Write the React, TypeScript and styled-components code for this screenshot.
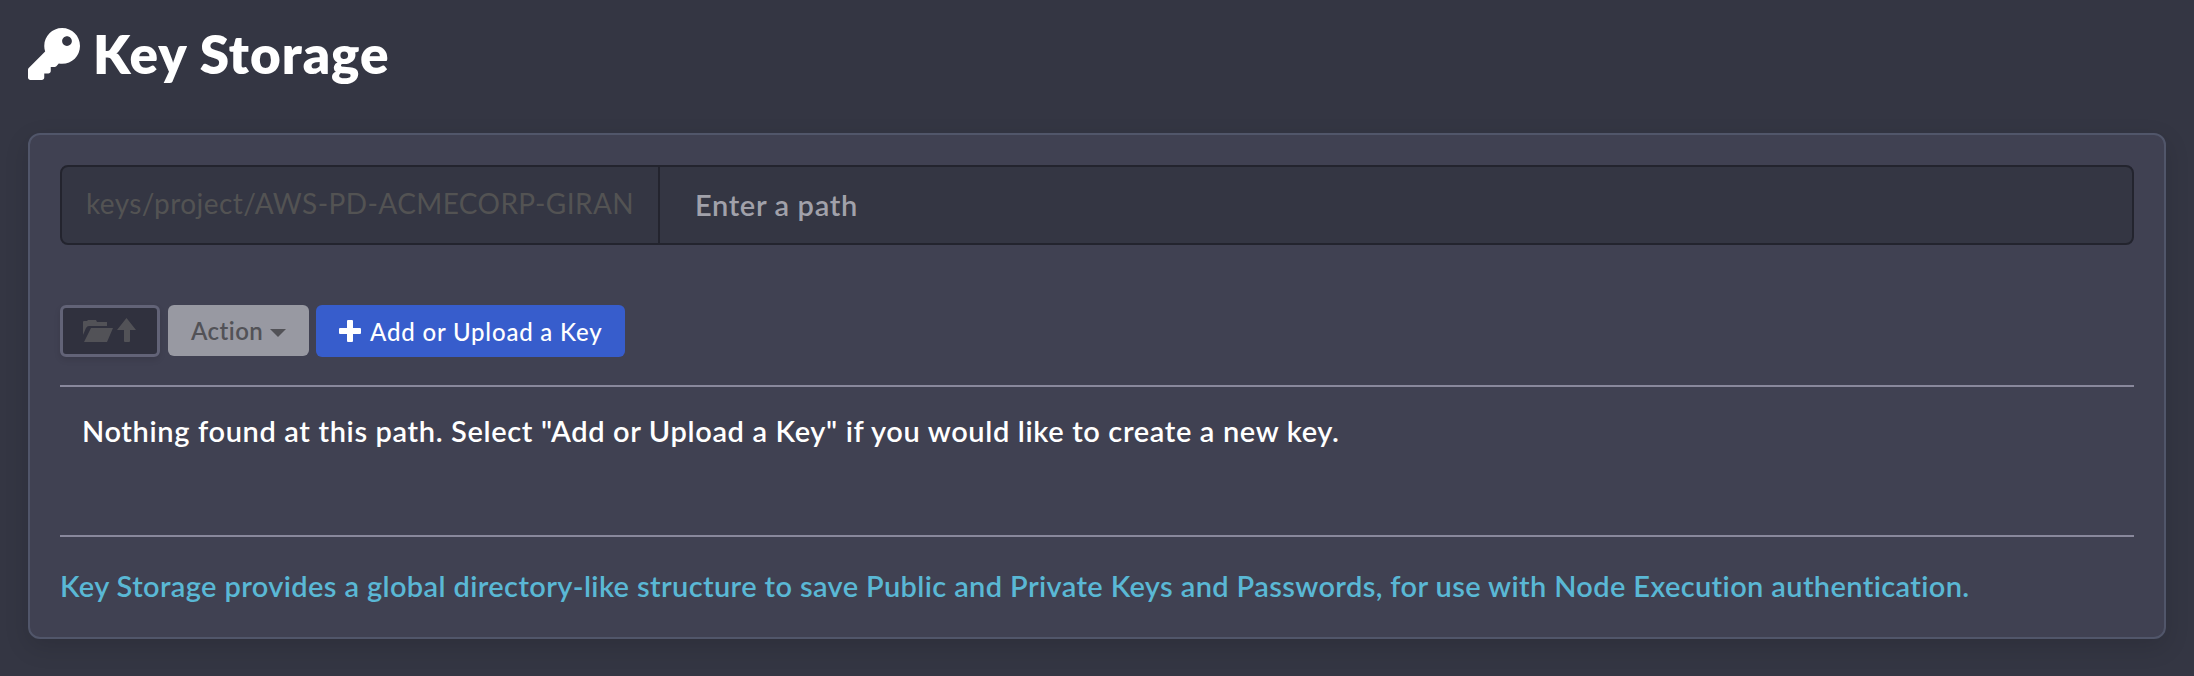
import React from "react";
import styled, { createGlobalStyle } from "styled-components";
import { FaKey } from "react-icons/fa";

const Global = createGlobalStyle`
  *, *::before, *::after { box-sizing: border-box; }
  body {
    margin: 0;
    background: #343643;
    color: #fff;
    font-family: Lato, "Open Sans", sans-serif;
    font-size: 29px;
    font-weight: 600;
    font-variant-ligatures: none;
  }
`;

const Page = styled.main`
  height: 676px;
  padding: 28px 28px 0;
  overflow: hidden;
`;

const Title = styled.h1`
  display: flex;
  align-items: flex-start;
  gap: 13px;
  height: 105px;
  margin: 0;
  font-size: 53px;
  font-weight: 800;
  line-height: 52px;
`;

const KeyIcon = styled(FaKey)`
  width: 52px;
  height: 52px;
`;

const Text = styled.span<{ $track?: number }>`
  letter-spacing: ${(p) => p.$track ?? 0}px;
  white-space: pre;
`;

const Card = styled.section`
  height: 506px;
  padding: 30px;
  border: 2px solid #51566a;
  border-radius: 12px;
  background: #404152;
  box-shadow: 0 8px 24px rgba(0, 0, 0, 0.13);
`;

const InputGroup = styled.div`
  display: flex;
  height: 80px;
  border: 2px solid #23242e;
  border-radius: 8px;
  background: #343643;
  overflow: hidden;
`;

const Addon = styled.div`
  width: 598px;
  padding: 0 0 0 24px;
  border-right: 2px solid #23242e;
  color: #535353;
  font-size: 28px;
  font-weight: 400;
  line-height: 72px;
`;

const PathField = styled.div`
  flex: 1;
  padding-left: 35px;
  color: #a1a1aa;
  line-height: 75px;
`;

const Toolbar = styled.div`
  display: flex;
  align-items: flex-start;
  height: 80px;
  margin-top: 60px;
`;

const Button = styled.button<{ $kind: "up" | "action" | "primary" }>`
  display: flex;
  align-items: center;
  flex: none;
  border-radius: 6px;
  font: inherit;
  font-size: 24px;
  border: 0;
  ${({ $kind }) =>
    $kind === "up"
      ? `width: 100px; height: 52px; padding: 0 0 0 20px; border: 3px solid #626377; background: #30313e; color: #525257; box-shadow: 0 3px 6px rgba(0,0,0,.1);`
      : $kind === "action"
      ? `width: 141px; height: 51px; margin-left: 8px; padding: 0 0 1px 23px; gap: 7px; background: #9899a2; color: #525257;`
      : `width: 309px; height: 52px; margin-left: 7px; padding: 0 0 0 23px; gap: 9px; background: #375dcc; color: #fff; font-weight: 500;`}
`;

const Caret = styled.i`
  margin-top: 5px;
  border: 8px solid transparent;
  border-top-color: currentColor;
  border-bottom: 0;
`;

const Rule = styled.hr`
  height: 2px;
  margin: 0;
  border: 0;
  background: #89889c;
`;

const Empty = styled.p`
  height: 148px;
  margin: 0;
  padding: 24px 0 0 22px;
  line-height: 39px;
`;

const Help = styled.p`
  margin: 0;
  padding: 29px 0 0;
  color: #5ab8d5;
  line-height: 39px;
`;

const FolderUpIcon = () => (
  <svg width="54" height="26" viewBox="0 0 54 26" fill="currentColor">
    <path d="M0 4q0-1 1-1h3l1-1h8l1 2h10v4H6q-2 0-3 2L0 17z M8 10h22l-6 14H1z M43.5 0 53 12h-6v11q0 1-1 1h-4q-1 0-1-1V12h-7z" />
  </svg>
);

const PlusIcon = () => (
  <svg width="22" height="22" viewBox="0 0 22 22" fill="currentColor">
    <path d="M9 0h4q1 0 1 1v7h7q1 0 1 1v4q0 1-1 1h-7v7q0 1-1 1H9q-1 0-1-1v-7H1q-1 0-1-1V9q0-1 1-1h7V1q0-1 1-1z" />
  </svg>
);

export default function App() {
  return (
    <>
      <Global />
      <Page>
        <Title>
          <KeyIcon />
          <Text $track={1}>Key Storage</Text>
        </Title>
        <Card>
          <InputGroup>
            <Addon>
              <Text $track={0.42}>keys/project/AWS-PD-ACMECORP-GIRAN</Text>
            </Addon>
            <PathField>
              <Text $track={0.65}>Enter a path</Text>
            </PathField>
          </InputGroup>
          <Toolbar>
            <Button $kind="up" aria-label="Up one level">
              <FolderUpIcon />
            </Button>
            <Button $kind="action">
              <Text $track={0.45}>Action</Text>
              <Caret />
            </Button>
            <Button $kind="primary">
              <PlusIcon />
              <Text $track={0.82}>Add or Upload a Key</Text>
            </Button>
          </Toolbar>
          <Rule />
          <Empty>
            <Text $track={0.64}>Nothing found at this path. Select "Add or Upload a Key" if you would like to create a new key.</Text>
          </Empty>
          <Rule />
          <Help>
            <Text $track={0.37}>
              Key Storage provides a global directory-like structure to save Public and Private Keys and Passwords, for use with Node Execution authentication.
            </Text>
          </Help>
        </Card>
      </Page>
    </>
  );
}
